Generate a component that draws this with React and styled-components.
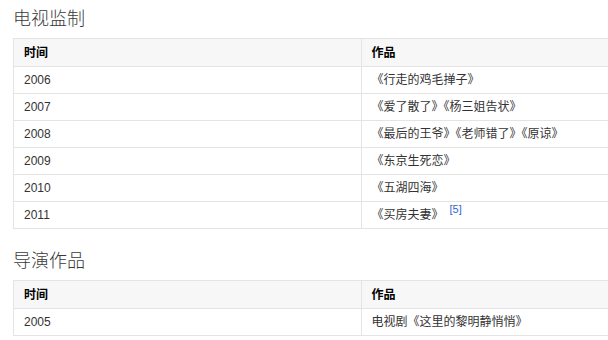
import React from 'react'
import styled, {createGlobalStyle} from 'styled-components'

//page reset and base font
const GlobalStyle = createGlobalStyle`
  html, body {
    margin: 0;
    padding: 0;
    background: #fff;
    overflow: hidden;
  }
  body {
    font-family: "Liberation Sans", "Noto Sans CJK SC", sans-serif;
    color: #333;
  }
`;

const Page = styled.div`
  box-sizing: border-box;
  padding: 5px 0 0 13px;
  width: 608px;
  overflow: hidden;
`;

const Section = styled.section`
  & + & {
    margin-top: 18px;
  }
`;

const Heading = styled.h2`
  margin: 0 0 9px 0;
  font-size: 18px;
  line-height: 24px;
  font-weight: 300;
  color: #3a3a3a;
  font-family: "Noto Sans CJK SC", sans-serif;
`;

const Table = styled.table`
  width: 696px;
  border-collapse: collapse;
  table-layout: fixed;
  font-size: 12px;
`;

const HeadCell = styled.th`
  background: #f7f7f7;
  border: 1px solid #e4e4e4;
  padding: 7px 10px 6px;
  line-height: 14px;
  text-align: left;
  font-weight: bold;
  color: #000;
`;

const Cell = styled.td`
  border: 1px solid #e4e4e4;
  padding: 6px 10px;
  line-height: 14px;
  color: #333;
  white-space: nowrap;
`;

const Ref = styled.sup`
  color: #3366cc;
  font-size: 11px;
  line-height: 0;
  margin-left: 6px;
  vertical-align: 6px;
`;

const supervised = [
    {year: "2006", work: "《行走的鸡毛掸子》"},
    {year: "2007", work: "《爱了散了》《杨三姐告状》"},
    {year: "2008", work: "《最后的王爷》《老师错了》《原谅》"},
    {year: "2009", work: "《东京生死恋》"},
    {year: "2010", work: "《五湖四海》"},
    {year: "2011", work: "《买房夫妻》", ref: "[5]"}
]

const directed = [
    {year: "2005", work: "电视剧《这里的黎明静悄悄》"}
]

function WorkTable(props) {
    return (
        <Table>
            <thead>
            <tr>
                <HeadCell>时间</HeadCell>
                <HeadCell>作品</HeadCell>
            </tr>
            </thead>
            <tbody>
            {props.rows.map((row) => (
                <tr key={row.year}>
                    <Cell>{row.year}</Cell>
                    <Cell>
                        {row.work}
                        {row.ref && <Ref>{row.ref}</Ref>}
                    </Cell>
                </tr>
            ))}
            </tbody>
        </Table>
    )
}

const App = () => {
    return (
        <Page>
            <GlobalStyle/>
            <Section>
                <Heading>电视监制</Heading>
                <WorkTable rows={supervised}/>
            </Section>
            <Section>
                <Heading>导演作品</Heading>
                <WorkTable rows={directed}/>
            </Section>
        </Page>
    )
}

export default App
